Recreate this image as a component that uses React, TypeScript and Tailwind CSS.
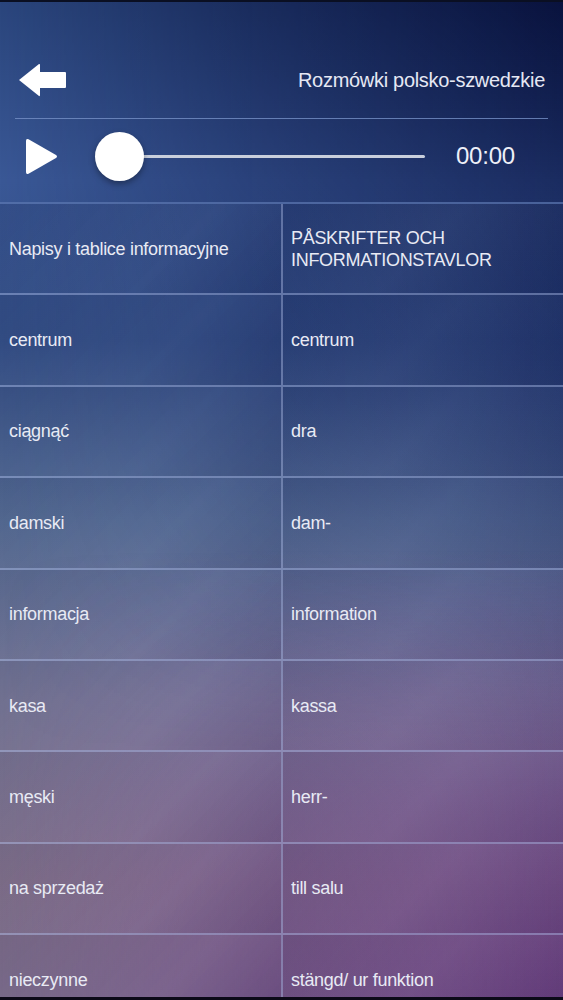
import React from "react";

const rows: [string, string][] = [
  ["Napisy i tablice informacyjne", "PÅSKRIFTER OCH INFORMATIONSTAVLOR"],
  ["centrum", "centrum"],
  ["ciągnąć", "dra"],
  ["damski", "dam-"],
  ["informacja", "information"],
  ["kasa", "kassa"],
  ["męski", "herr-"],
  ["na sprzedaż", "till salu"],
  ["nieczynne", "stängd/ ur funktion"],
];

export default function App() {
  return (
    <div
      className="relative w-[563px] h-[1000px] overflow-hidden text-[#e8eaf4] bg-[linear-gradient(180deg,#2a457c_0%,#3a5896_18%,#35518a_34%,#586f98_52%,#7a7a9a_70%,#85748f_88%,#807090_100%)]"
      style={{ fontFamily: '"Liberation Sans", Arial, sans-serif' }}
    >
      <div className="absolute inset-0 pointer-events-none bg-[linear-gradient(180deg,rgba(6,14,56,0.92)_0%,rgba(8,18,66,0.6)_20%,rgba(10,22,80,0.45)_40%,rgba(20,30,100,0.2)_60%,rgba(20,30,100,0)_75%)] [mask-image:linear-gradient(90deg,transparent_0%,rgba(0,0,0,0.5)_45%,black_100%)]" />
      <div className="absolute inset-0 pointer-events-none bg-[linear-gradient(180deg,rgba(100,50,130,0)_55%,rgba(100,50,130,0.5)_80%,rgba(95,45,120,0.75)_100%)] [mask-image:linear-gradient(90deg,transparent_0%,rgba(0,0,0,0.6)_50%,black_100%)]" />
      <div className="relative flex flex-col h-full">
        <div className="h-[2px] shrink-0 bg-[#0a0f22]" />
        {/* Header */}
        <div className="h-[200px] shrink-0 flex flex-col">
          <div className="mt-[61px] h-[34px] flex items-center justify-between pl-[18px] pr-[18px]">
            <svg width="48" height="34" viewBox="0 0 48 34">
              <path d="M1 17 L21 1 Q22 0.5 22 2 L22 9 L47 9 Q48 9 48 10 L48 24 Q48 25 47 25 L22 25 L22 32 Q22 33.5 21 33 Z" fill="#ffffff" />
            </svg>
            <span className="text-[20px] tracking-[-0.3px] text-[#e6e8f4]">Rozmówki polsko-szwedzkie</span>
          </div>
          <div className="mt-[21px] mx-[15px] h-px bg-[#7690c6]/80" />
          <div className="h-[74px] flex items-center pl-[25px] pr-[48px]">
            <svg width="33" height="37" viewBox="0 0 33 37">
              <path d="M1 3 Q1 0 3.5 1.3 L31 17 Q33 18.5 31 20 L3.5 35.7 Q1 37 1 34 Z" fill="#ffffff" />
            </svg>
            <div className="ml-[37px] relative flex-1 flex items-center h-[50px] max-w-[330px]">
              <div className="absolute left-[40px] right-[0px] h-[3px] rounded-full bg-[#c9cfdc]" />
              <div className="relative w-[49px] h-[49px] rounded-full bg-white shadow-[0_3px_6px_rgba(0,0,0,0.35)]" />
            </div>
            <span className="ml-auto text-[24px] tracking-[-0.2px] text-[#eef0f8]">00:00</span>
          </div>
        </div>
        {/* Table */}
        <div className="shrink-0 border-t-2 border-[#5c77b0]/70">
          {rows.map(([pl, sv], i) => (
            <div key={i} className="h-[91.4px] flex border-b-2 border-[#aabbe4]/45">
              <div className="w-[283px] border-r-2 border-[#aabbe4]/45 flex items-center pl-[9px] pr-2 bg-[linear-gradient(135deg,rgba(0,0,30,0.1)_0%,rgba(255,255,255,0.03)_60%,rgba(0,0,30,0.08)_100%)]">
                <span className="text-[18px] leading-[22px] tracking-[-0.3px]">{pl}</span>
              </div>
              <div className="flex-1 flex items-center pl-[8px] pr-4 bg-[linear-gradient(135deg,rgba(0,0,30,0.08)_0%,rgba(255,255,255,0.04)_50%,rgba(0,0,30,0.08)_100%)]">
                <span className="text-[18px] leading-[22px] tracking-[-0.3px]">{sv}</span>
              </div>
            </div>
          ))}
        </div>
      </div>
      <div className="absolute left-0 right-0 bottom-0 h-[3px] bg-[#0c0a18]" />
    </div>
  );
}
